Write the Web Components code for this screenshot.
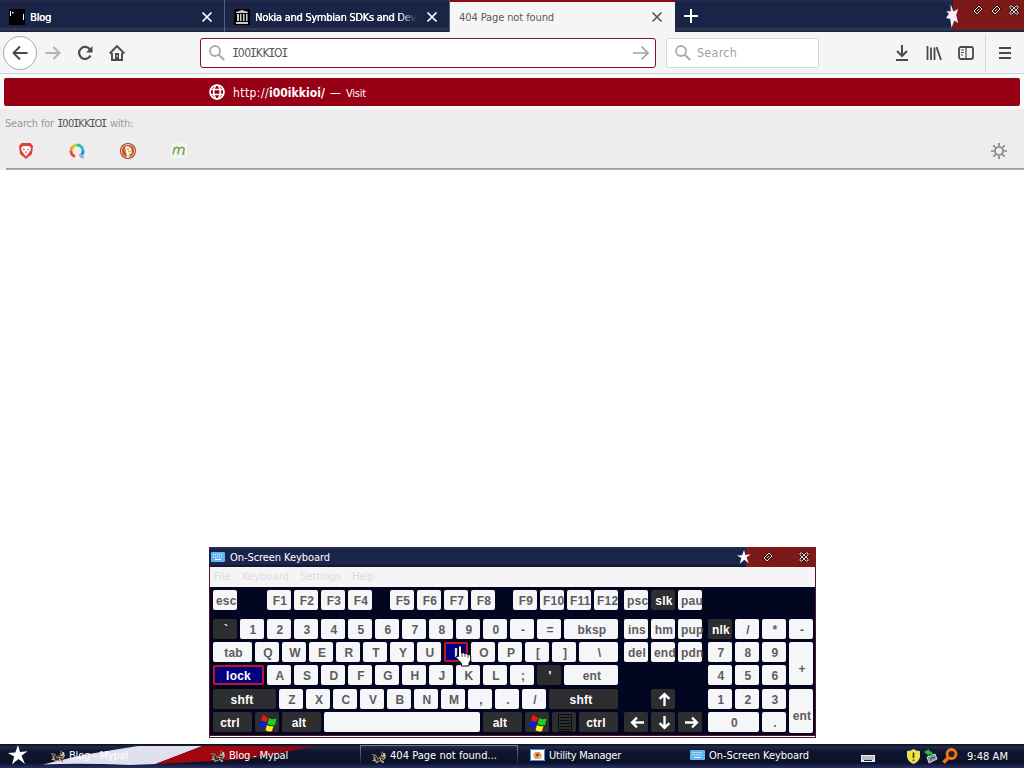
<!DOCTYPE html>
<html lang="en">
<head>
<meta charset="utf-8">
<title>404 Page not found</title>
<style>
  html, body {
    height: 100%;
    margin: 0;
    overflow: hidden;
  }
  body {
    background: #fff;
    color: #fff;
    display: flex;
    flex-direction: column;
    font: 11px/14px "DejaVu Sans Condensed", "DejaVu Sans", sans-serif;
    height: 768px;
    width: 1024px;
  }
  main {
    flex: 1;
    position: relative;
  }
  osk-window {
    left: 209px;
    position: absolute;
    top: 377px;
  }
</style>
</head>
<body>
<browser-tabs></browser-tabs>
<browser-toolbar></browser-toolbar>
<url-results></url-results>
<main><osk-window></osk-window></main>
<task-bar></task-bar>
<script>
(function() {
  const ICONS = {
    close: ['0 0 12 12', '<path d="M1.5 1.5l9 9M10.5 1.5l-9 9" stroke="currentColor" stroke-width="1.7"/>'],
    plus: ['0 0 14 14', '<path d="M7 0v14M0 7h14" stroke="#fff" stroke-width="2"/>'],
    term: ['0 0 16 16', '<path d="M0 0h16v16H0z" fill="#000"/><path d="M1 2h1v5H1zM3 3h1.500v1.500H3zM14 5h1v6h-1z" fill="#fff"/>'],
    museum: ['0 0 16 16', '<path d="M0 0h16v16H0z" fill="#000"/><path d="M2 4V3l6-2 6 2v1zM2 13h12v2H2zM3 5h2v7H3zm3 0h1.500v7H6zm3 0h1.500v7H9zm3 0h1.500v7H12z" fill="#ccc"/>'],
    back: ['0 0 16 16', '<path d="M15.500 8H1.500M8 1.500L1.500 8L8 14.500" stroke="#4a4a4a" stroke-width="2" stroke-linejoin="round"/>'],
    forward: ['0 0 16 16', '<path d="M.5 8h14M8.500 2l6 6l-6 6" stroke="#b4b4b4" stroke-width="2"/>'],
    reload: ['0 0 16 16', '<path d="M13 4.500A6 6 0 1 0 13.500 10.500" stroke="#4a4a4a" stroke-width="2.200"/><path d="M15.500 1v6.500H9z" fill="#4a4a4a"/>'],
    home: ['0 0 16 16', '<path d="M.7 8.500L8 1.200l7.300 7.300M3 8v7h10V8" stroke="#4a4a4a" stroke-width="1.900"/><path d="M6 8h4v7H6z" fill="#4a4a4a"/><path d="M7.500 10h1v2h-1z" fill="#f5f5f6"/>'],
    search: ['0 0 16 16', '<circle cx="6" cy="6" r="5" stroke="#aaa" stroke-width="1.800"/><path d="M9.700 9.700l5.500 5.300" stroke="#aaa" stroke-width="2.200"/>'],
    go: ['0 0 16 16', '<path d="M0 8h15M8.500 1.500L15 8l-6.500 6.500" stroke="#a2a2a2" stroke-width="1.700"/>'],
    download: ['0 0 14 18', '<path d="M7 1v11M2 7l5 5l5-5M1 16h12" stroke="#4a4a4a" stroke-width="2"/>'],
    library: ['0 0 16 16', '<path d="M1.500 1v14M5 2.500V15M8.500 2.500V15M10.500 2l4.500 13" stroke="#4a4a4a" stroke-width="1.800"/>'],
    sidebar: ['0 0 16 16', '<rect x="1" y="2" width="14" height="12" rx="2" stroke="#4a4a4a" stroke-width="1.800"/><path d="M8 2v12M3 5h3M3 7.500h3M3 10h2" stroke="#4a4a4a" stroke-width="1.200"/>'],
    menu: ['0 0 12 12', '<path d="M0 1h12M0 6h12M0 11h12" stroke="#4a4a4a" stroke-width="2"/>'],
    globe: ['0 0 16 16', '<g stroke="#fff" stroke-width="1.700"><circle cx="8" cy="8" r="7"/><ellipse cx="8" cy="8" rx="3.300" ry="7"/><path d="M1.500 5.500h13M1.500 10.500h13"/></g>'],
    brave: ['0 0 16 16', '<path d="M3.500 0h9L15 3l-1 8-6 5-6-5-1-8z" fill="#d9443a"/><path d="M4 3.500l2.500-.5h3l2.500.5 1 2.500-1.500 3L8 13.500 4.500 9 3 6z" fill="#fff"/><path d="M4.500 5.500l2.500 1-1 1.300zm7 0l-2.500 1 1 1.300zM7 8.500h2L8 11z" fill="#d9443a"/>'],
    qwant: ['0 0 16 16', '<g stroke-width="2.800"><path d="M6 13.500A6 6 0 0 1 2 8" stroke="#e8433c"/><path d="M2 8a6 6 0 0 1 2-4.500" stroke="#f39a1e"/><path d="M4 3.500A6 6 0 0 1 8 2" stroke="#c4d52b"/><path d="M8 2a6 6 0 0 1 6 6" stroke="#27c0b4"/><path d="M14 8a6 6 0 0 1-3 5.200" stroke="#2e7ddd"/><path d="M11 11.500l3.500 3.500" stroke="#7fb7ea"/></g>'],
    duck: ['0 0 16 16', '<circle cx="8" cy="8" r="8" fill="#a83a20"/><circle cx="8" cy="8" r="6.500" stroke="#f7ddc0" stroke-width="1" fill="#cf4a22"/><path d="M5 4l3-1 3 2 1 4-2 4-3 1-1-5z" fill="#fff"/><path d="M8 7.500l4 .5-2 1.500H8z" fill="#f5b51b"/><path d="M9 10.500l3 1-2 2z" fill="#4b9b35"/><path d="M4 6l2-1 0 3-1 3z" fill="#e9a02a"/><circle cx="8" cy="6" r=".7" fill="#345"/>'],
    em: ['0 0 16 16', '<path d="M0 0h16v15H0z" fill="#f4f4f0"/><path d="M2 11.500l1.500-7M3 7Q4.500 4 6.500 4.500T7.500 7.500L7 11.500M7.500 7Q9 4 11.500 4.500T12.800 7.500l-.7 3.500 1.400.2" stroke="#72a94e" stroke-width="1.600"/>'],
    gear: ['0 0 16 16', '<circle cx="8" cy="8" r="4" stroke="#858585" stroke-width="1.700"/><path d="M8 0v3M8 13v3M0 8h3M13 8h3M2.300 2.300l2.200 2.200M11.500 11.500l2.200 2.200M13.700 2.300l-2.200 2.200M4.500 11.500l-2.200 2.200" stroke="#858585" stroke-width="1.700"/>'],
    star: ['0 0 20 20', '<path d="M10 0l2 7 7.500-.8-6 4.500L17 19l-6.600-5L4 19.500l2.200-8L0 8l7.300-.6z" fill="#fff"/>'],
    halfstar: ['0 0 14 24', '<path d="M5 0l3 7.500L13 5l-2 6 2 8-4-2.500L6 24l-1.500-9L0 14l3-4-2.500-3L5 7.500z" fill="#f4f0fa"/>'],
    diamond: ['0 0 10 10', '<path d="M1 6L6 1l3 3-5 5z" fill="#5a2a24" stroke="#230b0b" stroke-width="1.800"/><path d="M1 6L6 1l3 3-5 5z" stroke="#f3e6e0" stroke-width="1"/><path d="M4 6l2-2" stroke="#e6d0c8" stroke-width=".8"/>'],
    knot: ['0 0 10 10', '<path d="M1 1h2l6 6v2H7L1 3zM9 1H7L1 7v2h2l6-6z" stroke="#2a0b0b" stroke-width="1.800"/><path d="M1 1h2l6 6v2H7L1 3zM9 1H7L1 7v2h2l6-6z" stroke="#f3e6e0" stroke-width=".9"/>'],
    keyboard: ['0 0 14 10', '<rect width="14" height="10" rx="1" fill="#61b6f2"/><path d="M2 2.500h10M2 5h10" stroke="#eefaff" stroke-dasharray="1 1"/><path d="M4 7.500h6" stroke="#eefaff"/>'],
    windows: ['0 0 18 18', '<path d="M4 1q2 0 3 2l2 .5-1.500 4.500Q5 8 4.500 7L1.800 6.500z" fill="#f51313"/><path d="M10 4q3 2 7.500.8L16 11q-4 1-7.500-1z" fill="#19d219"/><path d="M1.500 8q3-1.500 6 1L6 14q-3-2-6.300-1z" fill="#0a1cf0"/><path d="M8 11q3 2 6.500 1L13 17q-3 1.500-6.500-1z" fill="#ffef19"/>'],
    list: ['0 0 14 18', '<path d="M.5.5h13v17H.5z" stroke="#090909"/><path d="M2 3.500h10M2 6.500h10M2 9.500h10M2 12.500h10M2 15.500h10" stroke="#090909"/>'],
    up: ['0 0 12 12', '<path d="M6 12V1M1.500 5.500L6 1l4.500 4.500" stroke="#fff" stroke-width="2.200"/>'],
    hand: ['0 0 17 22', '<path d="M3.500 1.500Q5 0 6.500 1.500V8l2-.2 1 .8 2-.1 1 1 2 .1 1.200 1.400v4L14 18v3H6.500v-2.500L1 12.500Q1 10 3.500 11.500z" fill="#fff" stroke="#000" stroke-width="1"/><path d="M7 8v4M10 9v3M13 10v3" stroke="#333" stroke-width=".8"/>'],
    mypal: ['0 0 15 13', '<path d="M1 4l4 1 2 3 3-2 1-5 1 2h2l1 4-2 3v3h-2l-1-2-3 1-1 1H5l-1-2H1l2-2z" fill="#b5a58c"/><path d="M1.500 5.500L5 7l1 3m3-3l4 1m-8 3l4-1m2-7l1 2M4 9h5m1 0l3 2" stroke="#1f1b19" stroke-width="1.200"/><path d="M12 3l2 2-1 1z" fill="#fff1d4"/>'],
    utility: ['0 0 15 12', '<path d="M0 0h15v12H0z" fill="#fff"/><path d="M.5.5h14v11H.5z" stroke="#3a8de8"/><path d="M5 3h5l2 4-3 3H5L3 6z" fill="#f0a04b"/><path d="M7.500 4l2 2-2 2-2-2z" fill="#7b4f38"/><path d="M8.500 7h3v3h-3z" fill="#e5c87c"/>'],
    tray: ['0 0 14 12', '<path d="M0 5h14v7H0z" fill="#eee"/><path d="M1.500 7h12M1.500 9h12" stroke="#292939" stroke-dasharray="1 1"/><path d="M3 10.500h8" stroke="#292939"/><path d="M7 4V2h4V0" stroke="#151515"/>'],
    shield: ['0 0 13 15', '<path d="M6.500 0Q9 2 13 2v6q-1 5-6.500 7Q1 13 0 8V2q4 0 6.500-2z" fill="#e0d88a"/><path d="M6.500 1.800Q9 3 11.500 3v5q-1 4-5 5.500Q2 12 1.500 8V3Q4 3 6.500 1.800z" fill="#f5e535"/><path d="M6.500 3.500V9M6.500 10.500V12" stroke="#433b17" stroke-width="1.700"/>'],
    device: ['0 0 14 14', '<path d="M3 8l8-3 2 5-8 4z" fill="#8999a3" stroke="#cbd4d9"/><path d="M0 3l5-3v2q4 0 4 5H7Q7 5 5 5v2z" fill="#22bd39"/><path d="M6 10l5-2" stroke="#263646"/>'],
    magnifier: ['0 0 16 16', '<circle cx="9.500" cy="6" r="4.500" fill="#2b1d24" stroke="#f0761a" stroke-width="2.800"/><path d="M6.500 9.500L1.500 14.500" stroke="#f0761a" stroke-width="3.400"/>'],
    flag: ['0 0 320 24', '<defs><linearGradient id="r"><stop offset=".4" stop-color="#a20710"/><stop offset="1" stop-color="#7a0a18"/></linearGradient></defs><path d="M43 20.500Q65 15 83 11Q112 6 138 2H202L156 20 130 21Q82 19 43 20.500z" fill="#dfe1ee"/><path d="M155 20L203 2H313Q285 9 246 15Q200 18 155 20z" fill="url(#r)"/>'],
  };

  class BaseElement extends HTMLElement {
    constructor() {
      super();
      this._root = this.attachShadow({mode: 'open'});
    }

    connectedCallback() {
      this._root.innerHTML = `<style>:host { box-sizing: border-box; display: block; }${this.css()}</style>${this.html()}`;
    }
  }

  // <ui-icon name width height>
  class UIIcon extends BaseElement {
    css() {
      return ':host { flex: none; line-height: 0; } svg { display: block; overflow: visible; }';
    }
    html() {
      const [box, shape] = ICONS[this.getAttribute('name')];
      const w = this.getAttribute('width') || 16;
      const h = this.getAttribute('height') || w;
      return `<svg width="${w}" height="${h}" viewBox="${box}" fill="none" preserveAspectRatio="none">${shape}</svg>`;
    }
  }

  // A single line of text, tracked so that it fills the given width
  class FitText extends BaseElement {
    css() {
      return `
        :host { flex: none; white-space: pre; }
        span { display: inline-block; }
        ::slotted(i) { font-family: "DejaVu Sans Mono", monospace; font-style: normal; margin: 0 -1px; }
      `;
    }
    html() {
      return '<span><slot></slot></span>';
    }
    connectedCallback() {
      super.connectedCallback();
      const width = +this.getAttribute('width');
      const span = this._root.querySelector('span');
      const natural = span.getBoundingClientRect().width;
      span.style.letterSpacing = `${(width - natural) / this.textContent.length}px`;
      this.style.width = `${width}px`;
    }
  }

  class BrowserTab extends BaseElement {
    css() {
      return `
        :host {
          align-items: center;
          border-right: 1px solid #53607f;
          display: flex;
          height: 32px;
          padding: 2px 11px 0 9px;
          width: 225px;
        }
        :host([active]) {
          background: #f5f5f6;
          border-right: 0;
          border-top: 2px solid #8c0718;
          color: #5a5a5a;
          padding-right: 12px;
          padding-top: 0;
        }
        .label {
          flex: 1;
          margin-left: 5px;
          min-width: 0;
          overflow: hidden;
          padding-top: 1px;
        }
        :host([active]) .label { margin-left: 0; }
        :host([fade]) .label { mask-image: linear-gradient(90deg, #000 88%, transparent); margin-right: 9px; }
        :host(:not([active])) .label { text-shadow: .35px 0 #fff; }
      `;
    }
    html() {
      const icon = this.getAttribute('icon');
      return `${icon ? `<ui-icon name="${icon}"></ui-icon>` : ''}
        <div class="label"><slot></slot></div><ui-icon name="close" width="12"></ui-icon>`;
    }
  }

  class BrowserTabs extends BaseElement {
    css() {
      return `
        :host {
          background: linear-gradient(#292f4d 0, #1a2447 3px, #1a2447 26px, #242b48 28px, #3a4058 29px, #1c2340 31px);
          display: flex;
          height: 32px;
        }
        .new { padding: 9px 0 0 9px; }
        .caption {
          background: linear-gradient(90deg, #1a244700 7px, #7d1a19 7px);
          display: flex;
          gap: 8px;
          height: 30px;
          margin-left: auto;
          padding: 0 5px 0 0;
          width: 73px;
        }
        .caption > * { margin-top: 5px; }
        .caption > :first-child { margin: 4px auto 0 0; }
      `;
    }
    html() {
      return `
        <browser-tab icon="term"><fit-text width="21">Blog</fit-text></browser-tab>
        <browser-tab icon="museum" fade><fit-text width="161">Nokia and Symbian SDKs and Dev</fit-text></browser-tab>
        <browser-tab active><fit-text width="95">404 Page not found</fit-text></browser-tab>
        <div class="new"><ui-icon name="plus" width="14"></ui-icon></div>
        <div class="caption">
          <ui-icon name="halfstar" width="13" height="24"></ui-icon>
          <ui-icon name="diamond" width="10"></ui-icon>
          <ui-icon name="diamond" width="10"></ui-icon>
          <ui-icon name="knot" width="10"></ui-icon>
        </div>`;
    }
  }

  class BrowserToolbar extends BaseElement {
    css() {
      return `
        :host {
          align-items: center;
          background: #f5f5f6;
          border-bottom: 1px solid #ccd3df;
          color: #555;
          display: flex;
          height: 42px;
          padding: 0 13px 0 3px;
        }
        .back {
          background: #fff;
          border: 1px solid #aaa;
          border-radius: 50%;
          box-sizing: border-box;
          height: 34px;
          padding: 8px;
          width: 34px;
        }
        .nav { display: flex; gap: 16px; margin-left: 8px; }
        .field {
          align-items: center;
          background: #fff;
          border: 1px solid #d8d8d8;
          border-radius: 3px;
          box-sizing: border-box;
          display: flex;
          gap: 8px;
          height: 30px;
          padding: 0 6px 0 8px;
        }
        .field fit-text { padding-top: 1px; }
        .url { border-color: #82112a; margin-left: 75px; width: 456px; }
        .url fit-text { flex: 1; font-size: 12px; }
        .find { color: #a2a2a2; gap: 6px; margin-left: 10px; width: 153px; }
        .find fit-text { font-size: 12.500px; }
        .tools { align-items: center; display: flex; gap: 16px; margin-left: auto; }
        .tools :first-child { margin-right: 1px; }
        .sep { background: #d4d4d4; height: 36px; margin: 0 -3px 0 -5px; width: 1px; }
      `;
    }
    html() {
      return `
        <div class="back"><ui-icon name="back"></ui-icon></div>
        <div class="nav">
          <ui-icon name="forward"></ui-icon><ui-icon name="reload"></ui-icon><ui-icon name="home"></ui-icon>
        </div>
        <div class="field url">
          <ui-icon name="search"></ui-icon>
          <fit-text width="54"><i>I</i>00<i>I</i>KK<i>I</i>O<i>I</i></fit-text>
          <ui-icon name="go"></ui-icon>
        </div>
        <div class="field find"><ui-icon name="search"></ui-icon><fit-text width="40">Search</fit-text></div>
        <div class="tools">
          <ui-icon name="download" width="14" height="18"></ui-icon>
          <ui-icon name="library"></ui-icon>
          <ui-icon name="sidebar"></ui-icon>
          <div class="sep"></div>
          <ui-icon name="menu" width="12"></ui-icon>
        </div>`;
    }
  }

  class UrlResults extends BaseElement {
    css() {
      return `
        :host {
          background:
            linear-gradient(#959595, #b5b5b5) 6px 100% / 100% 2px no-repeat,
            linear-gradient(#fafafa 34px, #ededed 36px);
          height: 96px;
          padding: 4px 4px 0;
        }
        .hit {
          align-items: center;
          background: #980015;
          border-radius: 2px;
          display: flex;
          height: 28px;
          padding-left: 205px;
        }
        .hit ui-icon { margin-right: 8px; }
        .hit fit-text { font-size: 12px; padding-top: 2px; }
        .hit .host { font-weight: bold; }
        .hit .dash { margin: 0 4px 0 5px; }
        .hit .visit { font-size: 11px; padding-top: 4px; }
        .with { color: #999; display: flex; gap: 4px; margin: 11px 0 0 1px; }
        .with .term { color: #555; }
        .engines { align-items: center; display: flex; gap: 35px; padding: 12px 17px 0 14px; }
        .engines :last-child { margin-left: auto; margin-right: -4px; }
      `;
    }
    html() {
      return `
        <div class="hit">
          <ui-icon name="globe"></ui-icon>
          <fit-text width="36">http://</fit-text><fit-text class="host" width="56">i00ikkioi/</fit-text>
          <fit-text class="dash" width="12">—</fit-text><fit-text class="visit" width="20">Visit</fit-text>
        </div>
        <div class="with">
          <fit-text width="49">Search for</fit-text>
          <fit-text class="term" width="48"><i>I</i>00<i>I</i>KK<i>I</i>O<i>I</i></fit-text>
          <fit-text width="23">with:</fit-text>
        </div>
        <div class="engines">
          <ui-icon name="brave"></ui-icon><ui-icon name="qwant"></ui-icon>
          <ui-icon name="duck"></ui-icon><ui-icon name="em"></ui-icon>
          <ui-icon name="gear"></ui-icon>
        </div>`;
    }
  }

  class OskKey extends BaseElement {
    css() {
      return `
        :host {
          background: #f6f6f8;
          border-radius: 2px;
          color: #5c5c5c;
          display: flex;
          flex: none;
          font: bold 12px/20px "Liberation Sans", Arial, sans-serif;
          height: 20px;
          letter-spacing: .2px;
          padding-left: 3px;
          padding-right: 1px;
          white-space: pre;
          width: 24px;
        }
        :host { box-sizing: border-box; }
        span { margin: 1px auto 0; }
        ui-icon { margin: auto; }
        :host([dark]) { background: #2e2e30; color: #fff; }
        :host([left]) { padding-right: 8px; }
        :host([icon]) { padding: 1px 0 0 2px; }
        :host([on]) { background: #000080; border: 2px solid #c31327; color: #fff; line-height: 16px; padding-left: 1px; }
      `;
    }
    html() {
      const icon = this.getAttribute('icon');
      const turn = this.getAttribute('turn') || 0;
      return icon ?
        `<ui-icon name="${icon}" width="${this.getAttribute('iw')}" height="${this.getAttribute('ih')}"
                  style="transform: rotate(${turn}deg)"></ui-icon>` :
        '<span><slot></slot></span>';
    }
  }

  const key = (label, attrs = '', style = '') => `<osk-key ${attrs} style="${style}">${label}</osk-key>`;
  const keys = labels => labels.split(' ').map(label => key(label)).join('');
  const wide = (label, width, attrs) => key(label, attrs, `width: ${width}px`);
  const arrow = (turn, style) => key('', `dark icon="up" iw="13" ih="13" turn="${turn}"`, style);
  const gap = '<i></i>';
  const half = '<i class="half"></i>';
  const win = key('', 'dark icon="windows" iw="18" ih="18"');

  class OskWindow extends BaseElement {
    css() {
      return `
        :host {
          border: 1px solid #51142a;
          border-top: 0;
          height: 191px;
          width: 607px;
        }
        .title {
          align-items: center;
          background: linear-gradient(90deg, transparent 537px, #7d1a19 537px),
            linear-gradient(#2a3152 0, #18234a 3px, #1b264b 17px, #10172f 19px);
          display: flex;
          height: 20px;
          margin-left: -1px;
          margin-right: -1px;
          padding: 0 7px 0 2px;
        }
        .title fit-text { margin: 0 auto 0 5px; padding-top: 1px; }
        .title ui-icon + ui-icon { margin-left: 12px; }
        .title ui-icon:last-child { margin-left: 26px; }
        .menu {
          background: #f5f5f7;
          color: #dcdce0;
          display: flex;
          gap: 11px;
          height: 20px;
          line-height: 19px;
          padding-left: 4px;
        }
        .board {
          background: #020621;
          border-bottom: 1px solid #51142a;
          box-sizing: border-box;
          display: flex;
          gap: 6px;
          height: 149px;
          padding: 3px 2px 0 3px;
        }
        .main, .nav, .pad {
          display: grid;
          grid-template-rows: 29px 23px 23px 24px 23px 21px;
        }
        .row { display: flex; gap: 3px; }
        .row i { width: 24px; }
        .row i.half { width: 12px; }
        .nav { column-gap: 3px; grid-template-columns: repeat(3, 24px); }
        .pad { column-gap: 3px; grid-template-columns: repeat(4, 24px); }
        .pointer { left: 245px; position: absolute; top: 98px; }
      `;
    }
    html() {
      return `
        <div class="title">
          <ui-icon name="keyboard" width="14" height="10"></ui-icon>
          <fit-text width="100">On-Screen Keyboard</fit-text>
          <ui-icon name="star" width="14"></ui-icon>
          <ui-icon name="diamond" width="10"></ui-icon>
          <ui-icon name="knot" width="10"></ui-icon>
        </div>
        <div class="menu">
          <fit-text width="17">File</fit-text><fit-text width="47">Keyboard</fit-text>
          <fit-text width="41">Settings</fit-text><fit-text width="22">Help</fit-text>
        </div>
        <div class="board">
          <div class="main">
            <div class="row">${keys('esc')}${gap}${keys('F1 F2 F3 F4')}${half}${keys('F5 F6 F7 F8')}${half}${keys('F9 F10 F11 F12')}</div>
            <div class="row">${key('`', 'dark')}${keys('1 2 3 4 5 6 7 8 9 0 - =')}${wide('bksp', 54)}</div>
            <div class="row">${wide('tab', 39)}${keys('Q W E R T Y U')}${key('I', 'on')}${keys('O P [ ]')}${wide('\\', 39)}</div>
            <div class="row">${wide('lock', 51, 'on')}${keys('A S D F G H J K L ;')}${key('\'', 'dark')}${wide('ent', 54)}</div>
            <div class="row">${wide('shft', 63, 'dark left')}${keys('Z X C V B N M , . /')}${wide('shft', 69, 'dark left')}</div>
            <div class="row">
              ${wide('ctrl', 39, 'dark left')}${win}${wide('alt', 39, 'dark left')}${wide('', 156)}${wide('alt', 39, 'dark left')}${win}
              ${key('', 'dark icon="list" iw="14" ih="18"')}${wide('ctrl', 39, 'dark left')}
            </div>
          </div>
          <div class="nav">
            ${keys('psc')}${key('slk', 'dark')}${keys('pau ins hm pup del end pdn')}
            ${arrow(0, 'grid-area: 5 / 2')}${arrow(-90, 'grid-area: 6 / 1')}${arrow(180, 'grid-area: 6 / 2')}${arrow(90, 'grid-area: 6 / 3')}
          </div>
          <div class="pad">
            <i style="grid-column: span 4"></i>
            ${key('nlk', 'dark')}${keys('/ * - 7 8 9')}
            ${key('+', '', 'grid-row: span 2; height: 43px; line-height: 52px')}${keys('4 5 6 1 2 3')}
            ${key('ent', '', 'grid-row: span 2; height: 44px; line-height: 52px')}
            ${key('0', '', 'grid-column: span 2; width: 51px')}${keys('.')}
          </div>
        </div>
        <ui-icon class="pointer" name="hand" width="17" height="22"></ui-icon>`;
    }
  }

  class TaskButton extends BaseElement {
    css() {
      return `
        :host {
          align-items: center;
          display: flex;
          flex: none;
          gap: 4px;
          height: 20px;
          padding-left: 10px;
          width: 160px;
        }
        :host([active]) {
          border: 1px solid #7a7eac;
          border-bottom: 0;
          border-image: linear-gradient(#7a7eac, #10173100) 1;
          margin-right: 2px;
          padding-top: 1px;
          width: 158px;
        }
        :host(:not([active])) ::slotted(fit-text) { padding-top: 2px; }
      `;
    }
    html() {
      return `<ui-icon name="${this.getAttribute('icon')}" width="${this.getAttribute('iw') || 15}"
                       height="${this.getAttribute('ih') || 13}"></ui-icon><slot></slot>`;
    }
  }

  class TaskBar extends BaseElement {
    css() {
      return `
        :host {
          background: linear-gradient(#0a0e1d 0, #222a49 3px, #10162f 7px, #0c1228 19px, #222c5e 23px);
          display: flex;
          height: 24px;
          padding-top: 1px;
          position: relative;
        }
        .flag { left: 0; position: absolute; top: 0; }
        .start { box-sizing: border-box; padding-left: 8px; position: relative; width: 40px; }
        task-button { position: relative; }
        .tray { align-items: center; display: flex; gap: 4px; height: 22px; margin-left: auto; padding-right: 16px; }
        .tray ui-icon:first-child { margin-right: 28px; }
        .tray fit-text { margin-left: 5px; padding-top: 1px; }
      `;
    }
    html() {
      return `
        <ui-icon class="flag" name="flag" width="320" height="24"></ui-icon>
        <div class="start"><ui-icon name="star" width="20"></ui-icon></div>
        <task-button icon="mypal"><fit-text width="59">Blog - Mypal</fit-text></task-button>
        <task-button icon="mypal"><fit-text width="59">Blog - Mypal</fit-text></task-button>
        <task-button icon="mypal" active><fit-text width="107">404 Page not found...</fit-text></task-button>
        <task-button icon="utility" ih="12"><fit-text width="72">Utility Manager</fit-text></task-button>
        <task-button icon="keyboard" iw="15" ih="10"><fit-text width="100">On-Screen Keyboard</fit-text></task-button>
        <div class="tray">
          <ui-icon name="tray" width="14" height="12"></ui-icon>
          <ui-icon name="shield" width="13" height="15"></ui-icon>
          <ui-icon name="device" width="14"></ui-icon>
          <ui-icon name="magnifier" width="16"></ui-icon>
          <fit-text width="41">9:48 AM</fit-text>
        </div>`;
    }
  }

  customElements.define('ui-icon', UIIcon);
  customElements.define('fit-text', FitText);
  customElements.define('browser-tab', BrowserTab);
  customElements.define('browser-tabs', BrowserTabs);
  customElements.define('browser-toolbar', BrowserToolbar);
  customElements.define('url-results', UrlResults);
  customElements.define('osk-key', OskKey);
  customElements.define('osk-window', OskWindow);
  customElements.define('task-button', TaskButton);
  customElements.define('task-bar', TaskBar);
}());
</script>
</body>
</html>
